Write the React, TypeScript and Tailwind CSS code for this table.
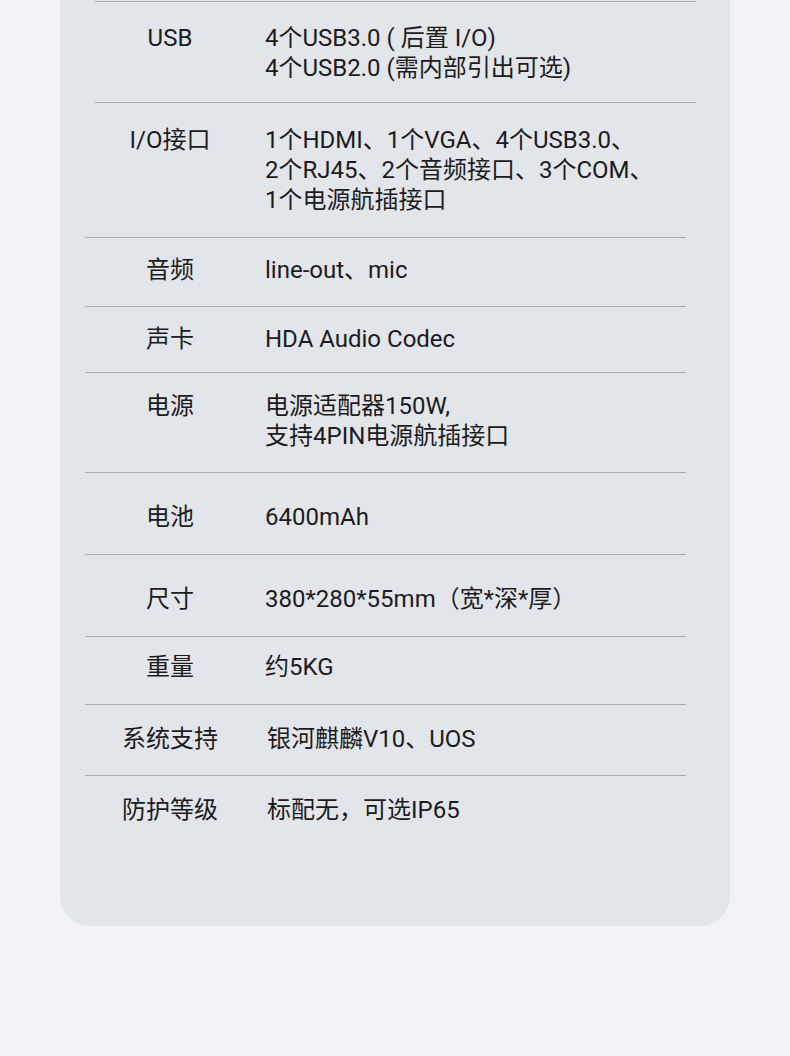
const rows = [
  { label: "USB", lines: ["4个USB3.0 ( 后置 I/O)", "4个USB2.0 (需内部引出可选)"], pad: "pt-[21px] pb-[19px]", line: "ml-[35px]", shift: "pl-[10px]" },
  { label: "I/O接口", lines: ["1个HDMI、1个VGA、4个USB3.0、", "2个RJ45、2个音频接口、3个COM、", "1个电源航插接口"], pad: "pt-[22px] pb-[22px]", line: "ml-[35px]", shift: "pl-[10px]" },
  { label: "音频", lines: ["line-out、mic"], pad: "pt-[17px] pb-[21px]", line: "ml-[25px]", shift: "pl-[10px]" },
  { label: "声卡", lines: ["HDA Audio Codec"], pad: "pt-[17px] pb-[18px]", line: "ml-[25px]", shift: "pl-[10px]" },
  { label: "电源", lines: ["电源适配器150W,", "支持4PIN电源航插接口"], pad: "pt-[18px] pb-[21px]", line: "ml-[25px]", shift: "pl-[10px]" },
  { label: "电池", lines: ["6400mAh"], pad: "pt-[29px] pb-[22px]", line: "ml-[25px]", shift: "pl-[10px]" },
  { label: "尺寸", lines: ["380*280*55mm（宽*深*厚）"], pad: "pt-[29px] pb-[22px]", line: "ml-[25px]", shift: "pl-[10px]" },
  { label: "重量", lines: ["约5KG"], pad: "pt-[15px] pb-[22px]", line: "ml-[25px]", shift: "pl-[10px]" },
  { label: "系统支持", lines: ["银河麒麟V10、UOS"], pad: "pt-[19px] pb-[21px]", line: "ml-[25px]", shift: "pl-[12px]" },
  { label: "防护等级", lines: ["标配无，可选IP65"], pad: "pt-[19px] pb-[101px]", line: "ml-[25px]", shift: "pl-[12px]" },
];

export default function App() {
  return (
    <div
      className="min-h-[1056px] w-[790px] bg-[#f1f2f6] text-[#1c1c1e]"
      style={{ fontFamily: 'Roboto, "Noto Sans CJK SC", sans-serif' }}
    >
      <div className="mx-[60px] w-[670px] rounded-b-[30px] bg-[#e2e5e9] pt-px">
        {rows.map((row) => (
          <div key={row.label}>
            <div className={`h-px w-[601px] bg-[#a9abb0] ${row.line}`} />
            <div className={`flex text-[24px] leading-[30px] ${row.pad}`}>
              <div className="ml-[25px] w-[170px] shrink-0 text-center">{row.label}</div>
              <div className={`whitespace-nowrap ${row.shift}`}>
                {row.lines.map((l) => (
                  <div key={l}>{l}</div>
                ))}
              </div>
            </div>
          </div>
        ))}
      </div>
    </div>
  );
}
